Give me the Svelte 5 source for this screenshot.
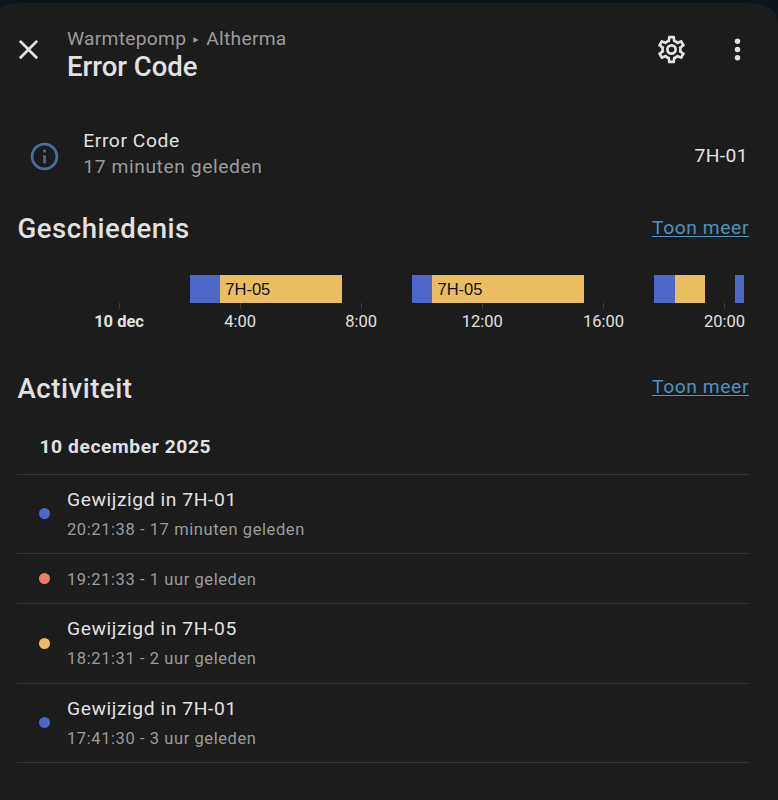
<script>
  const segments = [
    { w: 30.3, kind: 'blue' },
    { w: 121.4, kind: 'gold', label: '7H-05' },
    { w: 70.4, kind: 'none' },
    { w: 20.4, kind: 'blue' },
    { w: 151.5, kind: 'gold', label: '7H-05' },
    { w: 70.5, kind: 'none' },
    { w: 20.2, kind: 'blue' },
    { w: 30.3, kind: 'gold' },
    { w: 30, kind: 'none' },
    { w: 9, kind: 'blue' }
  ];
  const ticks = ['10 dec', '4:00', '8:00', '12:00', '16:00', '20:00'];
  const events = [
    { color: 'blue', title: 'Gewijzigd in 7H-01', time: '20:21:38 - 17 minuten geleden' },
    { color: 'coral', title: '', time: '19:21:33 - 1 uur geleden' },
    { color: 'gold', title: 'Gewijzigd in 7H-05', time: '18:21:31 - 2 uur geleden' },
    { color: 'blue', title: 'Gewijzigd in 7H-01', time: '17:41:30 - 3 uur geleden' }
  ];
</script>

<main class="dialog">
  <header>
    <svg class="close" viewBox="0 0 24 24"><path d="M19,6.41L17.59,5L12,10.59L6.41,5L5,6.41L10.59,12L5,17.59L6.41,19L12,13.41L17.59,19L19,17.59L13.41,12L19,6.41Z" /></svg>
    <div class="heading">
      <div class="crumbs"><span>Warmtepomp</span><svg viewBox="0 0 6 6"><path d="M0.3 0.3L5.8 3L0.3 5.7Z" /></svg><span>Altherma</span></div>
      <h1>Error Code</h1>
    </div>
    <svg class="cog" viewBox="0 0 24 24"><path d="M12,8A4,4 0 0,1 16,12A4,4 0 0,1 12,16A4,4 0 0,1 8,12A4,4 0 0,1 12,8M12,10A2,2 0 0,0 10,12A2,2 0 0,0 12,14A2,2 0 0,0 14,12A2,2 0 0,0 12,10M10,22C9.75,22 9.54,21.82 9.5,21.58L9.13,18.93C8.5,18.68 7.96,18.34 7.44,17.94L4.95,18.95C4.73,19.03 4.46,18.95 4.34,18.73L2.34,15.27C2.21,15.05 2.27,14.78 2.46,14.63L4.57,12.97L4.5,12L4.57,11L2.46,9.37C2.27,9.22 2.21,8.95 2.34,8.73L4.34,5.27C4.46,5.05 4.73,4.96 4.95,5.05L7.44,6.05C7.96,5.66 8.5,5.32 9.13,5.07L9.5,2.42C9.54,2.18 9.75,2 10,2H14C14.25,2 14.46,2.18 14.5,2.42L14.87,5.07C15.5,5.32 16.04,5.66 16.56,6.05L19.05,5.05C19.27,4.96 19.54,5.05 19.66,5.27L21.66,8.73C21.79,8.95 21.73,9.22 21.54,9.37L19.43,11L19.5,12L19.43,13L21.54,14.63C21.73,14.78 21.79,15.05 21.66,15.27L19.66,18.73C19.54,18.95 19.27,19.04 19.05,18.95L16.56,17.95C16.04,18.34 15.5,18.68 14.87,18.93L14.5,21.58C14.46,21.82 14.25,22 14,22H10M11.25,4L10.88,6.61C9.68,6.86 8.62,7.5 7.85,8.39L5.44,7.35L4.69,8.65L6.8,10.2C6.4,11.37 6.4,12.64 6.8,13.8L4.68,15.36L5.43,16.66L7.86,15.62C8.63,16.5 9.68,17.14 10.87,17.38L11.24,20H12.76L13.13,17.39C14.32,17.14 15.37,16.5 16.14,15.62L18.57,16.66L19.32,15.36L17.2,13.81C17.6,12.64 17.6,11.37 17.2,10.2L19.31,8.65L18.56,7.35L16.15,8.39C15.38,7.5 14.32,6.86 13.12,6.62L12.75,4H11.25Z" /></svg>
    <svg class="dots" viewBox="0 0 24 24"><path d="M12,16A2,2 0 0,1 14,18A2,2 0 0,1 12,20A2,2 0 0,1 10,18A2,2 0 0,1 12,16M12,10A2,2 0 0,1 14,12A2,2 0 0,1 12,14A2,2 0 0,1 10,12A2,2 0 0,1 12,10M12,4A2,2 0 0,1 14,6A2,2 0 0,1 12,8A2,2 0 0,1 10,6A2,2 0 0,1 12,4Z" /></svg>
  </header>

  <section class="entity">
    <svg class="info" viewBox="0 0 24 24"><path d="M11,9H13V7H11M12,20C7.59,20 4,16.41 4,12C4,7.59 7.59,4 12,4C16.41,4 20,7.59 20,12C20,16.41 16.41,20 12,20M12,2A10,10 0 0,0 2,12A10,10 0 0,0 12,22A10,10 0 0,0 22,12A10,10 0 0,0 12,2M11,17H13V11H11V17Z" /></svg>
    <div class="names">
      <div>Error Code</div>
      <div class="muted">17 minuten geleden</div>
    </div>
    <div class="state">7H-01</div>
  </section>

  <div class="section-head history-head"><h2>Geschiedenis</h2><a href="#history">Toon meer</a></div>
  <section class="chart">
    <div class="bars">
      {#each segments as s}
        <div class="seg {s.kind}" style:width="{s.w}px">{s.label ?? ''}</div>
      {/each}
    </div>
    <div class="axis">
      {#each ticks as t, i}
        <div class="tick" class:bold={i === 0}><i></i><span>{t}</span></div>
      {/each}
    </div>
  </section>

  <div class="section-head activity-head"><h2>Activiteit</h2><a href="#activity">Toon meer</a></div>
  <section class="log">
    <h3>10 december 2025</h3>
    {#each events as e}
      <div class="event" class:short={!e.title}>
        <span class="dot {e.color}"></span>
        <div class="text">
          {#if e.title}<div class="title">{e.title}</div>{/if}
          <div class="time">{e.time}</div>
        </div>
      </div>
    {/each}
  </section>
</main>

<style>
  :global(body) { background: #0b151a; }
  :global(#app) { padding-top: 3px; }
  .dialog {
    box-sizing: border-box;
    width: 778px;
    height: 797px;
    overflow: hidden;
    background: #1c1c1c;
    border-top-left-radius: 18px 6px;
    border-top-right-radius: 30px 18px;
    color: #e1e1e1;
    font-family: Roboto, "Noto Sans", sans-serif;
    font-size: 19.25px;
    letter-spacing: 0.58px;
  }
  h1, h2, h3 { margin: 0; font-weight: 500; }
  svg { fill: #e1e1e1; flex: none; display: block; }
  header { display: flex; height: 124px; box-sizing: border-box; padding: 23px 24px 0 11.5px; }
  header > svg { width: 33px; height: 33px; margin-top: 7px; }
  .heading { flex: 1; margin-left: 22.5px; }
  .crumbs { display: flex; align-items: center; height: 26px; line-height: 26px; color: #9b9b9b; letter-spacing: 0.26px; }
  .crumbs svg { width: 6px; height: 6px; fill: #9b9b9b; margin: 2px 7px 0 7px; }
  h1 { font-size: 27.5px; line-height: 30px; letter-spacing: 0; }
  .cog { margin-right: 33px; }
  .entity { display: flex; height: 84px; box-sizing: border-box; padding: 1px 30px 0 28px; line-height: 26px; }
  .info { width: 33px; height: 33px; fill: #4c6c9c; margin-top: 12px; }
  .names { flex: 1; margin-left: 22.3px; }
  .muted { color: #9b9b9b; }
  .state { margin-top: 15px; letter-spacing: 0.4px; }
  .section-head { display: flex; justify-content: space-between; padding: 0 29px 0 17.5px; }
  h2 { font-size: 27.5px; line-height: 36px; letter-spacing: 0.55px; }
  a { color: #4a94c0; line-height: 26px; margin-top: 4px; text-decoration: underline; text-decoration-thickness: 1.4px; text-underline-offset: 2px; }
  .history-head { height: 64px; }
  .chart { height: 96px; font-size: 16.5px; letter-spacing: 0; }
  .bars { display: flex; height: 27.5px; padding-left: 190px; }
  .seg { box-sizing: border-box; flex: none; color: #111; font: 16.5px/28px "Liberation Sans", Arial, sans-serif; }
  .seg.gold { padding-left: 5px; }
  .blue { background: #4c67c8; }
  .gold { background: #eabd60; }
  .coral { background: #ee7c66; }
  .axis { display: flex; padding-left: 58.5px; }
  .tick { width: 121.1px; flex: none; display: flex; flex-direction: column; align-items: center; }
  .tick i { width: 1px; height: 6px; background: #3c3c3c; }
  .tick span { line-height: 20px; margin-top: 3.5px; }
  .bold { font-weight: 700; }
  .log { padding: 0 29px 0 17px; }
  .activity-head { height: 62.5px; }
  .activity-head a { margin-top: 3px; }
  h3 { box-sizing: border-box; height: 41px; padding-left: 22.5px; line-height: 25px; font-size: 19.25px; font-weight: 700; border-bottom: 1px solid #353535; }
  .event { display: flex; align-items: center; box-sizing: border-box; height: 79.7px; border-bottom: 1px solid #353535; padding-left: 22px; }
  .event.short { height: 49.7px; }
  .dot { width: 11px; height: 11px; border-radius: 50%; margin-right: 17px; flex: none; }
  .text { padding-top: 1px; }
  .title { line-height: 30px; }
  .time { font-size: 16.5px; line-height: 29px; color: #9b9b9b; }
</style>
